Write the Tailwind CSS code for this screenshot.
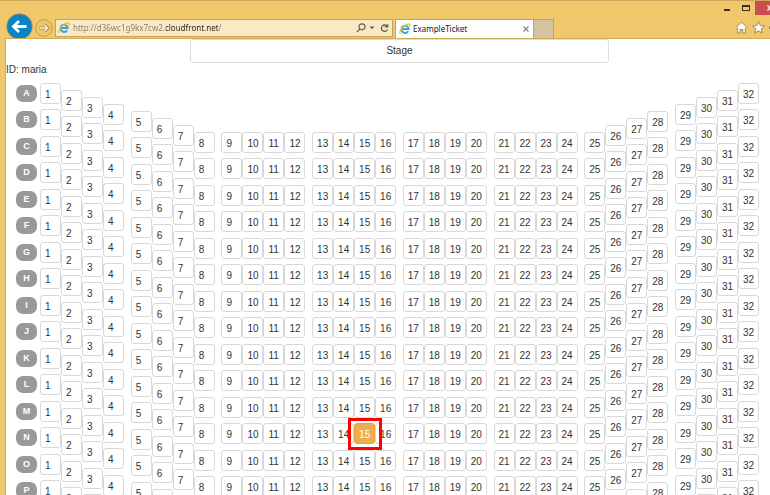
<!DOCTYPE html>
<html lang="en">
<head>
<meta charset="utf-8">
<title>ExampleTicket</title>
<script src="https://cdn.jsdelivr.net/npm/@tailwindcss/browser@4"></script>
</head>
<body class="h-screen overflow-hidden flex flex-col bg-[#f0c76a] font-['Liberation_Sans',Arial,sans-serif] text-[10px] text-[#333]">
<svg class="hidden">
  <symbol id="ie" viewBox="0 0 12 12">
    <path d="M9.2 8.2A3.6 3.6 0 1 1 9.7 6H3.2" fill="none" stroke="#36a3dd" stroke-width="2"/>
    <path d="M1.5 11C-.5 9.500 3 3.500 8 1.300 10.500.300 11.500 1.200 10.700 3" fill="none" stroke="#f2bb1c" stroke-width="1.300"/>
  </symbol>
</svg>
<header class="shrink-0 h-[38px] flex flex-col border-t border-[#c9a75b]">
  <div class="h-[14px] flex justify-end items-start">
    <button aria-label="Minimize" class="w-[19px] h-[14px] flex items-end justify-center pb-[4px]"><span class="w-[6px] h-[2px] bg-[#3b331f]"></span></button>
    <button aria-label="Maximize" class="w-[19px] h-[14px] flex items-center justify-center"><span class="w-[8px] h-[6px] border border-t-2 border-[#3b331f]"></span></button>
    <button aria-label="Close" class="w-[15px] h-[14px] bg-[#c94f4f] flex items-center justify-end overflow-hidden"><svg class="w-[3px] h-[6px]" viewBox="0 0 3 6"><path d="M.5.500L3 3 .5 5.500" fill="none" stroke="#fff" stroke-width="1.300"/></svg></button>
  </div>
  <nav class="h-[23px] flex items-end">
    <button aria-label="Back" class="ml-[6px] -mb-[2px] w-[27px] shrink-0">
      <svg viewBox="0 0 27 27" class="w-[27px] h-[27px]"><circle cx="13.500" cy="13.500" r="12.800" fill="#0a84c8" stroke="#b8964a" stroke-width=".8"/><path d="M20.500 13.500H8M13 8l-5.500 5.500L13 19" fill="none" stroke="#fff" stroke-width="2.800"/></svg>
    </button>
    <button aria-label="Forward" class="ml-[2px] mb-[1px] w-[18px] shrink-0">
      <svg viewBox="0 0 18 18" class="w-[18px] h-[18px]"><circle cx="9" cy="9" r="8.300" fill="none" stroke="#c19c48"/><path d="M4.500 9H12M9.300 5.500L12.800 9l-3.500 3.500" fill="none" stroke="#b5903f" stroke-width="3.200"/><path d="M5 9h7M9.300 5.800L12.500 9l-3.200 3.200" fill="none" stroke="#fdf0cf" stroke-width="1.500"/></svg>
    </button>
    <div class="ml-[2px] mb-[1px] w-[338px] h-[18px] shrink-0 flex items-center bg-[#fbe9c6] border border-[#c4a35c]">
      <svg class="ml-[2px] w-[12px] h-[12px]"><use href="#ie"/></svg>
      <input aria-label="Address" value="http://d36wc1g9kx7cw2.cloudfront.net/" class="ml-[3px] flex-1 min-w-0 h-[14px] leading-[14px] outline-none font-['Noto_Sans','Open_Sans',sans-serif] text-[8px] text-transparent bg-clip-text bg-[linear-gradient(90deg,#857a65_93px,#262219_93px_145px,#857a65_145px)]">
      <button aria-label="Search"><svg class="w-[10px] h-[10px]" viewBox="0 0 10 10" fill="none" stroke="#6a5f47" stroke-width="1.200"><circle cx="6" cy="3.800" r="3"/><path d="M3.800 6L.8 9.200"/></svg></button>
      <button aria-label="Show address list" class="ml-[3px]"><svg class="w-[6px] h-[4px]" viewBox="0 0 6 4"><path d="M.5.500h5L3 3.200z" fill="#6a5f47"/></svg></button>
      <button aria-label="Refresh" class="ml-[5px] mr-[3px]"><svg class="w-[9px] h-[10px]" viewBox="0 0 9 10"><path d="M7.300 3.500A3.200 3.200 0 1 0 7.500 6.500" fill="none" stroke="#6a5f47" stroke-width="1.300"/><path d="M8.300.500v4h-4z" fill="#6a5f47"/></svg></button>
    </div>
    <div class="ml-[2px] w-[139px] h-[19px] shrink-0 flex items-center bg-white border border-b-0 border-[#c4a35c]">
      <svg class="ml-[3px] w-[12px] h-[12px] shrink-0"><use href="#ie"/></svg>
      <a href="#" class="ml-[2px] flex-1 font-['Noto_Sans','Open_Sans',sans-serif] text-[8px] leading-[14px] text-[#222]">ExampleTicket</a>
      <button aria-label="Close tab" class="mr-[4px]"><svg class="w-[6px] h-[6px]" viewBox="0 0 6 6"><path d="M.5.500l5 5M5.500.500l-5 5" stroke="#888" stroke-width="1.200"/></svg></button>
    </div>
    <button aria-label="New tab" class="w-[20px] h-[19px] shrink-0 bg-[#d5c3a0] border border-b-0 border-l-0 border-[#c4a35c]"></button>
    <div class="ml-auto mb-[4px] flex items-center gap-[4px]">
      <button aria-label="Home"><svg class="w-[13px] h-[13px]" viewBox="0 0 13 13"><path d="M6.500 1L12 6.500l-1 1-.7-.6V12H7.800V8.500H5.200V12H2.700V6.900l-.7.6-1-1z" fill="#fff" stroke="#9c8045" stroke-width=".9"/></svg></button>
      <button aria-label="Favorites"><svg class="w-[13px] h-[13px]" viewBox="0 0 13 13"><path d="M6.500.700l1.700 3.900 4.200.4-3.200 2.800 1 4.200-3.700-2.200L2.800 12l1-4.200L.6 5l4.200-.4z" fill="#fff" stroke="#9c8045" stroke-width=".9"/></svg></button>
      <button aria-label="Tools" class="w-[1px] h-[3px] bg-[#9c8045]"></button>
    </div>
  </nav>
</header>
<main class="flex-1 min-h-0 overflow-hidden ml-[5px] bg-white border-t border-l border-[#cfab58]">
  <div class="ml-[184px] w-[419px] h-[24px] leading-[22px] text-center border border-[#ddd] rounded-[3px]">Stage</div>
  <p class="mt-[1px] leading-[12px]">ID: maria</p>
  <div id="rows" class="mt-[7px]"></div>
</main>
<script>
const drops = ['mt-0', 'mt-[7px]', 'mt-[14px]', 'mt-[21px]', 'mt-[28px]', 'mt-[35px]', 'mt-[42px]', 'mt-[49px]'];
const dropOf = n => n <= 8 ? drops[n - 1] : n >= 26 ? drops[32 - n] : drops[7];
const rows = document.getElementById('rows');
for (const letter of 'ABCDEFGHIJKLMNOP') {
  let html = '<h2 class="ml-[10px] mt-[2px] w-[21px] h-[17px] leading-[17px] rounded-[7px] bg-[#999] text-white text-[9px] font-bold text-center">' + letter + '</h2>' +
    '<div class="ml-[3px] w-[719px] shrink-0 flex justify-between">';
  for (let group = 0; group < 8; group++) {
    html += '<div class="flex items-start">';
    for (let i = 1; i <= 4; i++) {
      const n = group * 4 + i;
      const picked = letter === 'L' && n === 15;
      html += '<button aria-label="Seat ' + letter + n + '" class="relative w-[21px] h-[21px] pl-[4px] leading-[21px] text-left border rounded-[3px] ' + dropOf(n) +
        (picked ? ' bg-[#f0ad4e] border-[#eea236] text-white' : ' bg-white border-[#d8d8d8]') + '">' + n +
        '</button>' + (picked ? '<span class="relative w-0"><span class="absolute z-10 top-[44px] -left-[27px] w-[34px] h-[32px] border-3 border-[#f00] pointer-events-none"></span></span>' : '');
    }
    html += '</div>';
  }
  rows.insertAdjacentHTML('beforeend', '<section class="flex items-start odd:h-[26px] even:h-[27px]">' + html + '</div></section>');
}
</script>
</body>
</html>
